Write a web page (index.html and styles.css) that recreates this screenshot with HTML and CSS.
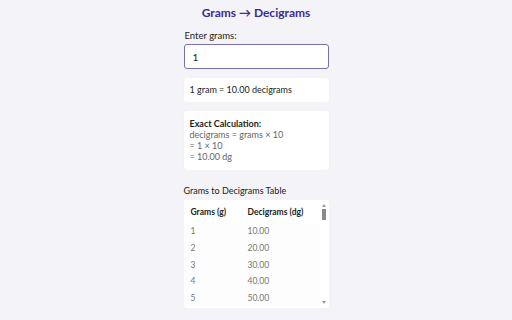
FILE: index.html
```html
<!DOCTYPE html>
<html>
<head>
<meta charset="utf-8">
<title>Grams to Decigrams</title>
<link rel="stylesheet" href="styles.css">
</head>
<body>
	<div class="container">
		<h1 class="title">Grams → Decigrams</h1>
		<label class="label" for="grams">Enter grams:</label>
		<input id="grams" class="input" type="text" value="1">
		<div class="card result">1 gram = 10.00 decigrams</div>
		<div class="card calc">
			<div class="calc-head">Exact Calculation:</div>
			<div>decigrams = grams × 10</div>
			<div>= 1 × 10</div>
			<div>= 10.00 dg</div>
		</div>
		<div class="table-title">Grams to Decigrams Table</div>
		<div class="table-box">
			<table>
				<thead>
					<tr><th>Grams (g)</th><th>Decigrams (dg)</th></tr>
				</thead>
				<tbody>
					<tr><td>1</td><td>10.00</td></tr>
					<tr><td>2</td><td>20.00</td></tr>
					<tr><td>3</td><td>30.00</td></tr>
					<tr><td>4</td><td>40.00</td></tr>
					<tr><td>5</td><td>50.00</td></tr>
				</tbody>
			</table>
			<!-- scrollbar look-alike -->
			<div class="scroll">
				<span class="arrow up"></span>
				<span class="thumb"></span>
				<span class="arrow down"></span>
			</div>
		</div>
	</div>
</body>
</html>
```

FILE: styles.css
```css
html, body {
	margin: 0;
	height: 100%;
}
body {
	background: #f4f3f8;
	font-family: Lato, "Noto Sans", sans-serif;
	color: #222;
	overflow: hidden;
}
.container {
	width: 145px;
	margin: 0 auto;
	padding-top: 4px;
	display: flex;
	flex-direction: column;
}
.title {
	margin: 0 0 8px;
	text-align: center;
	font-size: 12px;
	font-weight: 700;
	color: #3b2a9c;
	line-height: 18px;
	white-space: nowrap;
}
.label {
	font-size: 9.5px;
	line-height: 12px;
	margin: 0 0 2px 1px;
}
.input {
	box-sizing: border-box;
	height: 25px;
	width: 100%;
	margin: 0 0 9px;
	padding: 0 8px;
	border: 1px solid #7a6fb5;
	border-radius: 3px;
	font-family: inherit;
	font-size: 10px;
	background: #fff;
	color: #222;
}
.card {
	background: #fff;
	border-radius: 3px;
	font-size: 9px;
	box-shadow: 0 0 2px rgba(0, 0, 0, 0.04);
}
.result {
	height: 24px;
	line-height: 24px;
	padding: 0 6px;
	margin-bottom: 9px;
}
.calc {
	padding: 7px 6px 8px;
	line-height: 11px;
	color: #666;
	margin-bottom: 15px;
}
.calc-head {
	font-weight: 700;
	color: #222;
}
.table-title {
	font-size: 9px;
	line-height: 12px;
	margin-bottom: 3px;
}
.table-box {
	height: 108px;
	background: #fff;
	border-radius: 3px;
	display: flex;
	overflow: hidden;
}
table {
	flex: 1;
	align-self: flex-start;
	border-collapse: collapse;
	font-size: 8.5px;
}
th {
	text-align: left;
	font-weight: 700;
	color: #222;
	height: 23px;
	padding: 0 0 0 7px;
}
td {
	color: #777;
	height: 16.7px;
	padding: 0 0 0 7px;
	background: #fdfdfe;
}
th:first-child, td:first-child {
	width: 50px;
}
.scroll {
	width: 9px;
	display: flex;
	flex-direction: column;
	align-items: center;
	padding: 4px 0 4px;
}
.arrow {
	width: 0;
	height: 0;
	border-left: 2.5px solid transparent;
	border-right: 2.5px solid transparent;
}
.arrow.up {
	border-bottom: 3px solid #9a9a9a;
}
.arrow.down {
	margin-top: auto;
	border-top: 3px solid #9a9a9a;
}
.thumb {
	width: 4px;
	height: 11px;
	margin-top: 2px;
	background: #8a8a8a;
}
```
